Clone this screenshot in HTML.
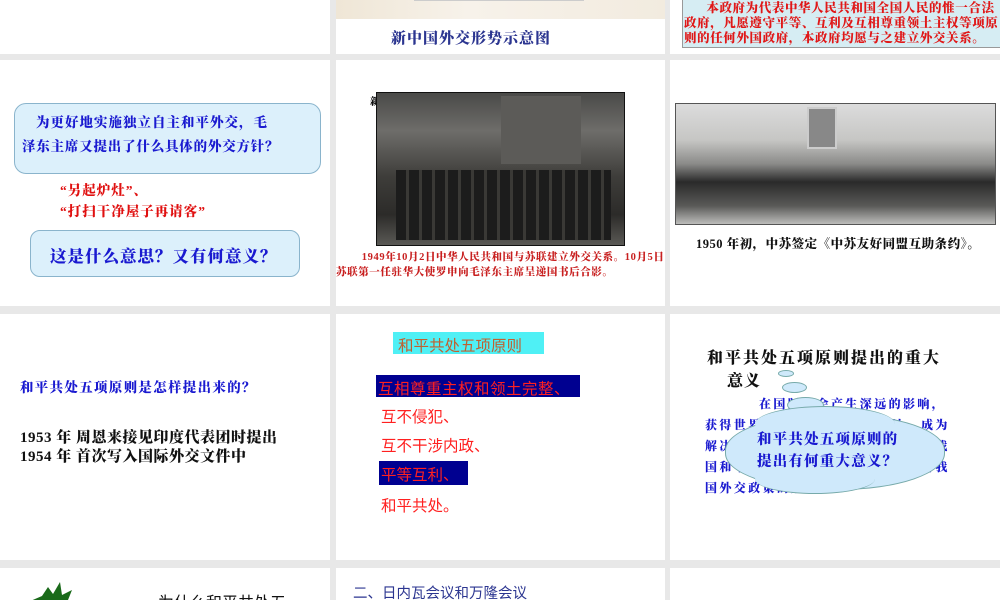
<!DOCTYPE html>
<html><head><meta charset="utf-8"><style>
*{margin:0;padding:0;box-sizing:border-box}
body{width:1000px;height:600px;background:#e8e8e8;position:relative;overflow:hidden;font-family:"Liberation Sans","Noto Sans CJK SC",sans-serif}
.s{position:absolute;background:#fff;overflow:hidden}
.a{position:absolute;white-space:nowrap}
.k{font-family:"Liberation Serif","Noto Serif CJK SC",serif;font-weight:900}
</style></head><body>
<!-- row 0 -->
<div class="s" style="left:0;top:0;width:330px;height:54px"></div>
<div class="s" style="left:336px;top:0;width:329px;height:54px">
 <div class="a" style="left:0;top:0;width:329px;height:19px;background:linear-gradient(90deg,#efe6d6,#f7f2ea 40%,#f2ebdf)"></div>
 <div class="a" style="left:78px;top:0;width:170px;height:1px;background:#ccc"></div>
 <div class="a k" style="left:55px;top:27px;font-size:15px;color:#2b3590;letter-spacing:1px">新中国外交形势示意图</div>
</div>
<div class="s" style="left:670px;top:0;width:330px;height:54px">
 <div class="a" style="left:12px;top:-2px;width:320px;height:50px;background:#d6edf3;border:1px solid #999"></div>
 <div class="a k" style="left:14px;top:1px;font-size:12.5px;line-height:15px;color:#e01818;white-space:normal;width:318px;letter-spacing:0.6px">&nbsp;&nbsp;&nbsp;&nbsp;&nbsp;&nbsp;本政府为代表中华人民共和国全国人民的惟一合法政府，凡愿遵守平等、互利及互相尊重领土主权等项原则的任何外国政府，本政府均愿与之建立外交关系。</div>
</div>
<!-- row 1 -->
<div class="s" style="left:0;top:60px;width:330px;height:246px">
 <div class="a" style="left:14px;top:43px;width:307px;height:71px;background:#dcf0fb;border:1px solid #8ab4cc;border-radius:12px"></div>
 <div class="a k" style="left:36px;top:51px;font-size:13.5px;letter-spacing:1px;color:#1a1ad0">为更好地实施独立自主和平外交，毛</div>
 <div class="a k" style="left:22px;top:75px;font-size:13.5px;letter-spacing:0.8px;color:#1a1ad0">泽东主席又提出了什么具体的外交方针？</div>
 <div class="a k" style="left:60px;top:119px;font-size:13.5px;letter-spacing:1px;color:#e01010">“另起炉灶”、</div>
 <div class="a k" style="left:60px;top:140px;font-size:13.5px;letter-spacing:1px;color:#e01010">“打扫干净屋子再请客”</div>
 <div class="a" style="left:30px;top:170px;width:270px;height:47px;background:#dcf0fb;border:1px solid #8ab4cc;border-radius:10px"></div>
 <div class="a k" style="left:50px;top:183px;font-size:16.5px;letter-spacing:1px;color:#1a1ad0">这是什么意思？又有何意义？</div>
</div>
<div class="s" style="left:336px;top:60px;width:329px;height:246px">
 <div class="a k" style="left:34px;top:33px;font-size:10px">新</div>
 <div class="a" style="left:40px;top:32px;width:249px;height:154px;background:linear-gradient(180deg,#4a4a48 0%,#6e6d6a 25%,#3e3d3a 55%,#2c2b29 80%,#5a5955 100%);border:1px solid #111"></div>
 <div class="a" style="left:165px;top:36px;width:80px;height:68px;background:#5c5b58"></div>
 <div class="a" style="left:60px;top:110px;width:215px;height:70px;background:repeating-linear-gradient(90deg,#1c1c1c 0 10px,#3a3936 10px 13px)"></div>
 <div class="a k" style="left:0;top:190px;width:329px;font-size:10.5px;letter-spacing:0.6px;line-height:15px;color:#c82020;white-space:normal">&nbsp;&nbsp;&nbsp;&nbsp;&nbsp;&nbsp;&nbsp;&nbsp;1949年10月2日中华人民共和国与苏联建立外交关系。10月5日苏联第一任驻华大使罗申向毛泽东主席呈递国书后合影。</div>
</div>
<div class="s" style="left:670px;top:60px;width:330px;height:246px">
 <div class="a" style="left:5px;top:43px;width:321px;height:122px;background:linear-gradient(180deg,#dcdcdc 0%,#c6c6c4 30%,#8a8a88 50%,#2a2a2a 65%,#5a5a58 85%,#bcbcba 100%);border:1px solid #555"></div>
 <div class="a" style="left:137px;top:47px;width:30px;height:42px;background:#888;border:2px solid #ccc"></div>
 <div class="a k" style="left:26px;top:174px;font-size:12.5px;letter-spacing:0.5px;color:#111">1950 年初，中苏签定《中苏友好同盟互助条约》。</div>
</div>
<!-- row 2 -->
<div class="s" style="left:0;top:314px;width:330px;height:246px">
 <div class="a k" style="left:20px;top:62px;font-size:13.5px;letter-spacing:1.3px;color:#1a1ad0">和平共处五项原则是怎样提出来的？</div>
 <div class="a k" style="left:20px;top:112px;font-size:15px;letter-spacing:0.5px;color:#111">1953 年 周恩来接见印度代表团时提出</div>
 <div class="a k" style="left:20px;top:131px;font-size:15px;letter-spacing:0.5px;color:#111">1954 年 首次写入国际外交文件中</div>
</div>
<div class="s" style="left:336px;top:314px;width:329px;height:246px">
 <div class="a" style="left:57px;top:18px;width:151px;height:22px;background:#4ff0f5"></div>
 <div class="a" style="left:62px;top:20px;font-size:15.5px;color:#c06030">和平共处五项原则</div>
 <div class="a" style="left:40px;top:61px;width:204px;height:22px;background:#000090"></div>
 <div class="a" style="left:42px;top:63px;font-size:15.5px;letter-spacing:0.5px;color:#ff2020">互相尊重主权和领土完整、</div>
 <div class="a" style="left:45px;top:91px;font-size:15.5px;color:#ff2020">互不侵犯、</div>
 <div class="a" style="left:45px;top:120px;font-size:15.5px;color:#ff2020">互不干涉内政、</div>
 <div class="a" style="left:43px;top:147px;width:89px;height:24px;background:#000090"></div>
 <div class="a" style="left:45px;top:149px;font-size:15.5px;color:#ff2020">平等互利、</div>
 <div class="a" style="left:45px;top:180px;font-size:15.5px;color:#ff2020">和平共处。</div>
</div>
<div class="s" style="left:670px;top:314px;width:330px;height:246px">
 <div class="a k" style="left:37px;top:31px;font-size:16px;color:#111;letter-spacing:2px">和平共处五项原则提出的重大</div>
 <div class="a k" style="left:57px;top:54px;font-size:16px;color:#111;letter-spacing:1px">意义</div>
 <div class="a k" style="left:35px;top:80px;font-size:12px;letter-spacing:2.4px;line-height:21px;color:#1a1ad0;white-space:normal;width:254px">&nbsp;&nbsp;&nbsp;&nbsp;&nbsp;&nbsp;&nbsp;&nbsp;&nbsp;&nbsp;在国际上会产生深远的影响，获得世界上越来越多国家的承认，成为解决国与国之间问题的基本准则，是我国和平外交政策的完整体现，标志着我国外交政策的成熟。</div>
 <div class="a" style="left:108px;top:56px;width:16px;height:7px;border-radius:50%;background:#cfe9fb;border:1px solid #7aa"></div>
 <div class="a" style="left:112px;top:68px;width:25px;height:11px;border-radius:50%;background:#cfe9fb;border:1px solid #7aa"></div>
 <div class="a" style="left:117px;top:83px;width:37px;height:16px;border-radius:50%;background:#cfe9fb;border:1px solid #7aa"></div>
 <div class="a" style="left:55px;top:100px;width:220px;height:76px;border-radius:48%;background:#cfe9fb;border:1px solid #7aa"></div>
 <div class="a" style="left:85px;top:92px;width:140px;height:36px;border-radius:50%;background:#cfe9fb;border-top:1px solid #7aa"></div>
 <div class="a" style="left:85px;top:150px;width:120px;height:30px;border-radius:50%;background:#cfe9fb;border-bottom:1px solid #7aa"></div>
 <div class="a k" style="left:87px;top:114px;font-size:14.5px;letter-spacing:1.2px;color:#1a1ad0">和平共处五项原则的</div>
 <div class="a k" style="left:87px;top:136px;font-size:14.5px;letter-spacing:1.2px;color:#1a1ad0">提出有何重大意义？</div>
</div>
<!-- row 3 -->
<div class="s" style="left:0;top:568px;width:330px;height:32px">
 <svg class="a" style="left:28px;top:14px" width="56" height="20"><polygon points="0,20 14,14 20,5 25,12 32,0 34,13 44,8 40,18 56,20" fill="#1a6a1a"/></svg>
 <div class="a" style="left:158px;top:21px;font-size:16px;color:#111">为什么和平共处五</div>
</div>
<div class="s" style="left:336px;top:568px;width:329px;height:32px">
 <div class="a" style="left:17px;top:14px;font-size:14.5px;color:#2b3590">二、日内瓦会议和万隆会议</div>
</div>
<div class="s" style="left:670px;top:568px;width:330px;height:32px"></div>
</body></html>
